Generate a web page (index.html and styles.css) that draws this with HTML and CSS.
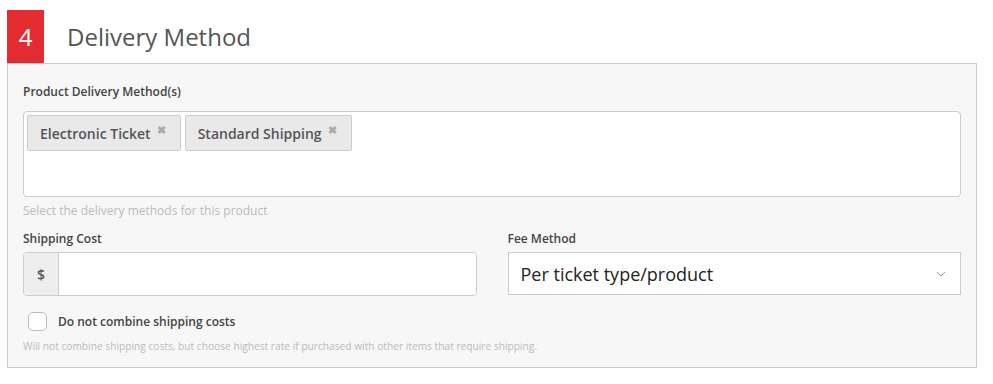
FILE: index.html
```html
<!DOCTYPE html>
<html lang="en">
<head>
    <meta charset="UTF-8">
    <title>Delivery Method</title>
    <link rel="stylesheet" href="styles.css">
</head>
<body>

    <div id="section">
        <div class="section-head">
            <span class="step">4</span>
            <h2>Delivery Method</h2>
        </div>

        <div class="panel">
            <label class="field-label">Product Delivery Method(s)</label>
            <div class="tag-box">
                <span class="tag">Electronic Ticket <span class="tag-x">&#10006;</span></span>
                <span class="tag">Standard Shipping <span class="tag-x">&#10006;</span></span>
            </div>
            <p class="help">Select the delivery methods for this product</p>

            <div class="row">
                <div class="col">
                    <label class="field-label">Shipping Cost</label>
                    <div class="input-group">
                        <span class="addon">$</span>
                        <input type="text" class="input">
                    </div>
                </div>
                <div class="col">
                    <label class="field-label">Fee Method</label>
                    <div class="select">
                        <span>Per ticket type/product</span>
                        <svg width="10" height="6" viewBox="0 0 10 6"><path d="M1 1l4 4 4-4" fill="none" stroke="#999" stroke-width="1"/></svg>
                    </div>
                </div>
            </div>

            <label class="check">
                <span class="box"></span>
                Do not combine shipping costs
            </label>
            <p class="help small">Will not combine shipping costs, but choose highest rate if purchased with other items that require shipping.</p>
        </div>
    </div>

</body>
</html>
```

FILE: styles.css
```css
* {
    box-sizing: border-box;
}

body {
    margin: 0;
    padding: 10px 0 0 7px;
    background-color: #fff;
    font-family: "Open Sans", sans-serif;
    color: #444;
}

#section {
    width: 970px;
}

.section-head {
    display: flex;
    align-items: center;
    height: 53px;
}

.step {
    width: 37px;
    height: 53px;
    background-color: #e32b32;
    color: #fff;
    font-size: 24px;
    display: flex;
    align-items: center;
    justify-content: center;
}

h2 {
    margin: 0 0 0 23px;
    font-size: 24px;
    font-weight: 400;
    color: #555;
}

.panel {
    background-color: #f7f7f7;
    border: 1px solid #ccc;
    padding: 20px 15px 14px 15px;
}

.field-label {
    display: block;
    font-size: 12px;
    line-height: 16px;
    font-weight: 600;
    color: #444;
    margin-bottom: 11px;
}

.col .field-label {
    margin-bottom: 5px;
}

.tag-box {
    height: 86px;
    background-color: #fff;
    border: 1px solid #ccc;
    border-radius: 4px;
    padding: 3px;
    display: flex;
    align-items: flex-start;
    gap: 4px;
}

.tag {
    height: 36px;
    background-color: #e9e9e9;
    border: 1px solid #ccc;
    border-radius: 2px;
    padding: 0 14px 0 12px;
    display: flex;
    align-items: center;
    font-size: 14px;
    font-weight: 600;
    color: #555;
}

.tag-x {
    color: #aaa;
    font-size: 11px;
    margin-left: 6px;
    position: relative;
    top: -4px;
}

.help {
    margin: 6px 0 12px;
    font-size: 12px;
    line-height: 16px;
    color: #bbb;
}

.help.small {
    font-size: 10.2px;
    line-height: 14px;
    margin: 8px 0 0;
}

.row {
    display: flex;
    gap: 31px;
}

.col {
    flex: 1;
}

.input-group {
    display: flex;
    height: 44px;
    border: 1px solid #ccc;
    border-radius: 4px;
    background-color: #fff;
    overflow: hidden;
}

.addon {
    width: 35px;
    background-color: #eee;
    border-right: 1px solid #ccc;
    display: flex;
    align-items: center;
    justify-content: center;
    font-weight: 600;
    font-size: 14px;
    color: #555;
}

.input {
    flex: 1;
    border: none;
    outline: none;
}

.select {
    height: 43px;
    border: 1px solid #ccc;
    background-color: #fff;
    display: flex;
    align-items: center;
    justify-content: space-between;
    padding: 0 14px 0 12px;
    font-size: 18px;
    color: #222;
}

.check {
    display: flex;
    align-items: center;
    height: 20px;
    margin-top: 15px;
    padding-left: 5px;
    font-size: 12px;
    font-weight: 600;
    color: #444;
}

.box {
    width: 19px;
    height: 19px;
    border: 1px solid #bbb;
    border-radius: 5px;
    background-color: #fff;
    margin-right: 11px;
}
```
